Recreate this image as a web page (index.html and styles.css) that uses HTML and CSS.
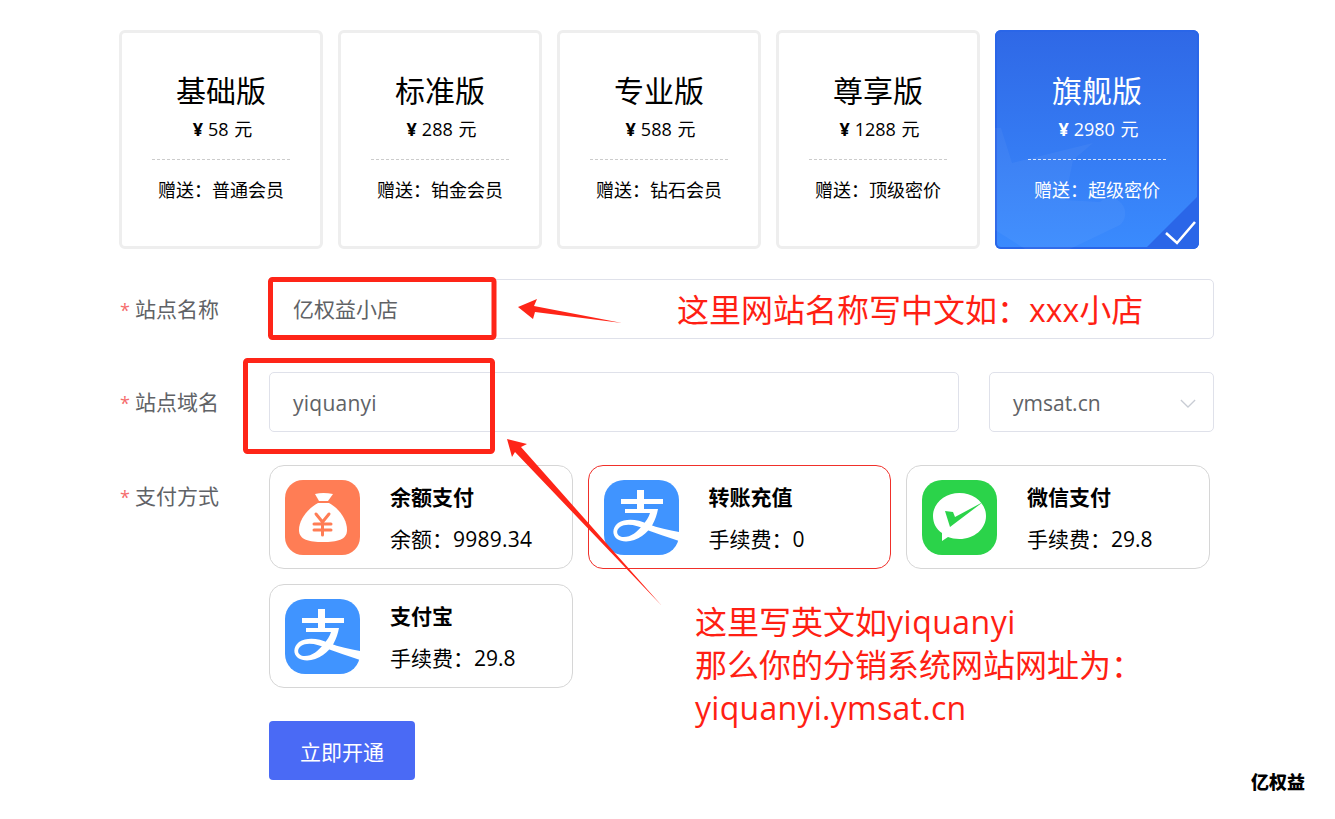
FILE: index.html
```html
<!DOCTYPE html>
<html lang="zh">
<head>
<meta charset="utf-8">
<title>开通分销系统</title>
<link rel="stylesheet" href="styles.css">
</head>
<body>
<main class="page">
  <section class="plans">
    <div class="plan">
      <div class="plan-name">基础版</div>
      <div class="plan-price"><span class="yen">¥</span>58 元</div>
      <div class="plan-rule"></div>
      <div class="plan-gift">赠送：普通会员</div>
    </div>
    <div class="plan">
      <div class="plan-name">标准版</div>
      <div class="plan-price"><span class="yen">¥</span>288 元</div>
      <div class="plan-rule"></div>
      <div class="plan-gift">赠送：铂金会员</div>
    </div>
    <div class="plan">
      <div class="plan-name">专业版</div>
      <div class="plan-price"><span class="yen">¥</span>588 元</div>
      <div class="plan-rule"></div>
      <div class="plan-gift">赠送：钻石会员</div>
    </div>
    <div class="plan">
      <div class="plan-name">尊享版</div>
      <div class="plan-price"><span class="yen">¥</span>1288 元</div>
      <div class="plan-rule"></div>
      <div class="plan-gift">赠送：顶级密价</div>
    </div>
    <div class="plan plan-active">
      <svg class="plan-bg" viewBox="0 0 204 219" aria-hidden="true">
        <path d="M0 98 L6 98 L17 133 L98 113 L78 130 L70 170 L105 172 A12 12 0 1 1 125 195 L75 219 L30 219 L0 200Z" fill="#fff" opacity=".045"/>
      </svg>
      <div class="plan-name">旗舰版</div>
      <div class="plan-price"><span class="yen">¥</span>2980 元</div>
      <div class="plan-rule"></div>
      <div class="plan-gift">赠送：超级密价</div>
      <svg class="plan-check" viewBox="0 0 54 54" aria-hidden="true">
        <path d="M0 54 L54 0 V48 A6 6 0 0 1 48 54Z" fill="#2a66e8"/>
        <path d="M21 38 L32 48 L50 27" fill="none" stroke="#fff" stroke-width="2.6"/>
      </svg>
    </div>
  </section>

  <section class="form">
    <div class="row">
      <label class="label"><span class="req">*</span>站点名称</label>
      <div class="field grow"><span class="input">亿权益小店</span></div>
    </div>
    <div class="row">
      <label class="label"><span class="req">*</span>站点域名</label>
      <div class="field domain"><span class="input latin">yiquanyi</span></div>
      <div class="field select">
        <span class="input">ymsat.cn</span>
        <svg class="caret" viewBox="0 0 18 10" aria-hidden="true"><path d="M1 1 L9 9 L17 1" fill="none" stroke="#c8ccd4" stroke-width="1.4"/></svg>
      </div>
    </div>
    <div class="row row-pay">
      <label class="label"><span class="req">*</span>支付方式</label>
      <div class="pays">
        <div class="pay">
          <svg class="pay-icon" viewBox="0 0 75 75" aria-hidden="true">
            <rect width="75" height="75" rx="18" fill="#ff7d55"/>
            <path d="M30 14 Q38 12 48 14 L43 21 H34Z" fill="#fff"/>
            <path d="M33 23 H44 C55 29 62 40 62 50 C62 60 52 62 38 62 C24 62 14 60 14 50 C14 40 22 29 33 23Z" fill="#fff"/>
            <path d="M31 34 L37.500 42 L44 34 M29 44 H46 M29 50 H46 M37.500 42 V55" fill="none" stroke="#ff7d55" stroke-width="3" stroke-linecap="round" stroke-linejoin="round"/>
          </svg>
          <div class="pay-text"><div class="pay-name">余额支付</div><div class="pay-fee">余额：<span class="num">9989.34</span></div></div>
        </div>
        <div class="pay pay-on">
          <svg class="pay-icon" viewBox="0 0 75 75" aria-hidden="true">
            <defs>
              <g id="alipay">
                <rect width="75" height="75" rx="20" fill="#4094ff"/>
                <path d="M33 10H40V19H59V24H40V29H54 C52 40 47 50 38 56 C30 62 19 63 13 59 C8 55 8 48 14 43 C22 38 33 39 44 44 C54 48 65 50 75 52 V61 C63 57 52 53 43 50 C33 45 22 43 16 47 C11 51 13 56 18 57 C26 58 33 52 38 46 C42 41 45 37 46 33 H21 V29 H33 V24 H17 V19 H33 Z" fill="#fff"/>
              </g>
            </defs>
            <use href="#alipay"/>
          </svg>
          <div class="pay-text"><div class="pay-name">转账充值</div><div class="pay-fee">手续费：0</div></div>
        </div>
        <div class="pay">
          <svg class="pay-icon" viewBox="0 0 75 75" aria-hidden="true">
            <rect width="75" height="75" rx="20" fill="#2bd34a"/>
            <path d="M37.500 13 C52 13 64 23 64 36 C64 49 52 59 37.500 59 C33 59 29 58 26 57 L20 61 L20 53 C14 49 11 43 11 36 C11 23 23 13 37.500 13Z" fill="#fff"/>
            <path d="M23 31 L31 32 L33 37 L61 22 L28 47Z" fill="#2bd34a"/>
          </svg>
          <div class="pay-text"><div class="pay-name">微信支付</div><div class="pay-fee">手续费：29.8</div></div>
        </div>
        <div class="pay">
          <svg class="pay-icon" viewBox="0 0 75 75" aria-hidden="true">
            <use href="#alipay"/>
          </svg>
          <div class="pay-text"><div class="pay-name">支付宝</div><div class="pay-fee">手续费：29.8</div></div>
        </div>
      </div>
    </div>
    <button class="submit" type="button">立即开通</button>
  </section>
</main>

<svg class="marks" viewBox="0 0 1335 819" aria-hidden="true">
  <rect x="270.500" y="279.500" width="223.500" height="58" rx="2" fill="none" stroke="#fe2518" stroke-width="5"/>
  <rect x="245.500" y="360.500" width="247" height="91" rx="2" fill="none" stroke="#fe2518" stroke-width="5"/>
  <path d="M518 307 L537 299 L534 306 L622 323 L535 312 L533 319Z" fill="#fe2518"/>
  <path d="M507 439 L527 444 L521 447 L662 606 L515 452 L512 457Z" fill="#fe2518"/>
</svg>
<p class="note note-a">这里网站名称写中文如：xxx小店</p>
<p class="note note-b">这里写英文如<span class="wide">yiquanyi</span><br>那么你的分销系统网站网址为：<br><span class="wide-some">yiquanyi.ymsat.cn</span></p>
<div class="watermark">亿权益</div>
</body>
</html>
```
FILE: styles.css
```css
* { box-sizing: border-box; }
html, body { margin: 0; height: 100%; }
body {
  position: relative;
  width: 1335px;
  height: 819px;
  overflow: hidden;
  background: #fff;
  color: #000;
  font-family: "Open Sans", "Noto Sans CJK SC", sans-serif;
}
.page { padding: 30px 0 0 119px; width: 1214px; }
.plans { display: flex; gap: 15px; }
.plan {
  position: relative;
  width: 204px;
  height: 219px;
  border: 3px solid #eee;
  border-radius: 6px;
  padding: 38px 30px 0;
  text-align: center;
  overflow: hidden;
}
.plan-name { font-size: 30px; line-height: 40px; }
.plan-price { font-size: 18px; line-height: 24px; margin-top: 6px; padding-left: 3px; word-spacing: 1px; }
.yen { margin-right: 5px; font-weight: 700; }
.plan-rule { border-top: 1px dashed #ccc; margin-top: 18px; }
.plan-gift { font-size: 18px; line-height: 24px; margin-top: 18px; }
.plan-active {
  border: 0;
  padding: 41px 33px 0;
  background: linear-gradient(180deg, #2f68e6 0%, #3a8bfe 100%);
  color: #fff;
  box-shadow: inset 0 0 0 2px #2a66e8;
}
.plan-active .plan-rule { border-top-color: rgba(255,255,255,.8); }
.plan-bg { position: absolute; left: 0; top: 0; width: 204px; height: 219px; }
.plan-check { position: absolute; right: 0; bottom: 0; width: 54px; height: 54px; }
.plan-name, .plan-price, .plan-rule, .plan-gift { position: relative; }

.form { margin-top: 30px; }
.row { display: flex; align-items: center; height: 60px; margin-bottom: 33px; }
.row-pay { height: auto; align-items: flex-start; }
.label {
  flex: none;
  width: 150px;
  padding-left: 1px;
  font-size: 21px;
  line-height: 62px;
  color: #606266;
}
.req { color: #f56c6c; font-size: 18px; margin-right: 5px; }
.field {
  height: 60px;
  display: flex;
  align-items: center;
  justify-content: space-between;
  padding: 0 23px;
  border: 1px solid #dfe1ea;
  border-radius: 5px;
  background: #fff;
}
.grow { width: 945px; padding-bottom: 2px; }
.domain { width: 690px; padding-top: 2px; }
.select { width: 225px; margin-left: 30px; padding: 2px 17px 0 23px; }
.input { font-size: 21px; color: #606266; }
.latin { letter-spacing: .25px; }
.caret { width: 16px; height: 9px; }
.pays { display: flex; flex-wrap: wrap; gap: 15px; width: 945px; }
.pay {
  display: flex;
  align-items: center;
  width: 303.500px;
  height: 104px;
  padding: 0 15px;
  border: 1px solid #d6d6d6;
  border-radius: 15px;
}
.pay-on { border-color: #f0302a; }
.pay-icon { flex: none; width: 75px; height: 75px; }
.pay-text { margin-left: 30px; padding-top: 1px; font-size: 21px; line-height: 28px; }
.pay-name { font-weight: 700; margin-bottom: 14px; }
.num { letter-spacing: .25px; }
.submit {
  display: block;
  width: 146px;
  height: 59px;
  margin-left: 150px;
  border: 0;
  border-radius: 4px;
  background: #4a6af5;
  color: #fff;
  font: inherit;
  font-size: 21px;
}

.marks { position: absolute; left: 0; top: 0; width: 1335px; height: 819px; pointer-events: none; }
.note {
  position: absolute;
  margin: 0;
  color: #ff1f14;
  font-size: 32px;
  line-height: 43px;
  white-space: nowrap;
}
.wide { letter-spacing: .5px; }
.wide-some { letter-spacing: .28px; }
.note-a { left: 677px; top: 288px; }
.note-b { left: 695px; top: 600px; }
.watermark {
  position: absolute;
  left: 1251px;
  top: 771px;
  font-size: 18px;
  line-height: 22px;
  font-weight: 900;
}
```
